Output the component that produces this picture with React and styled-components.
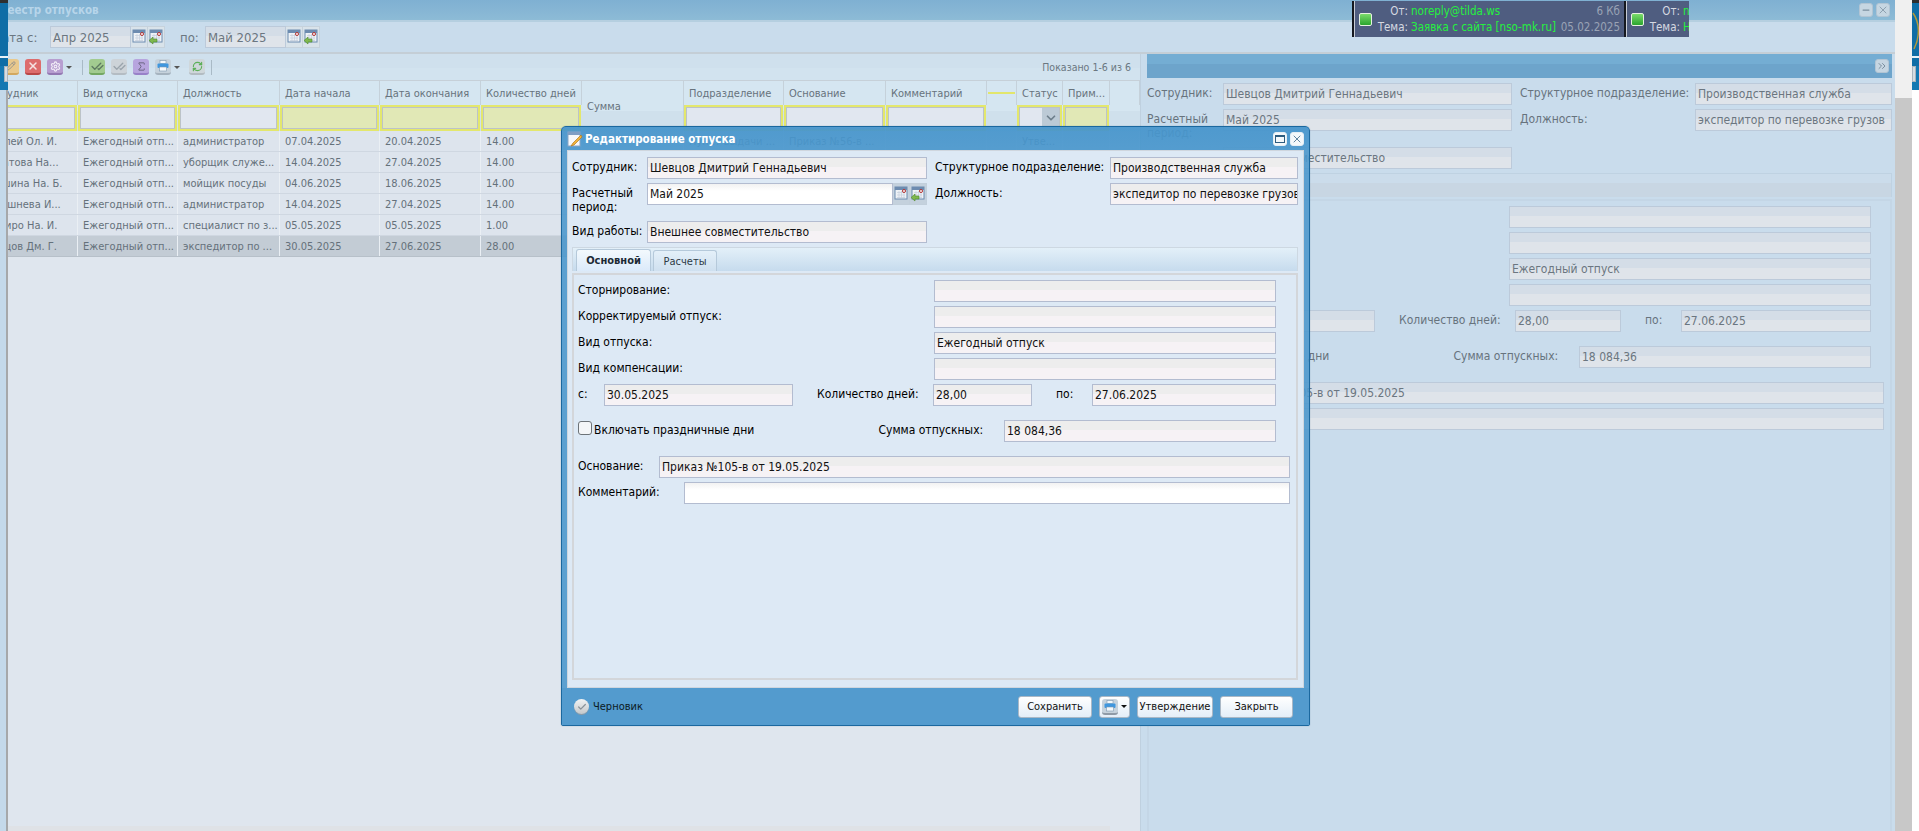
import React from 'react';
import styled, { createGlobalStyle } from 'styled-components';
import { Pencil, X, Settings, CheckCheck, Sigma, RefreshCw, Check, Minus, ChevronDown, ChevronsRight } from 'lucide-react';

const FONT = '"DejaVu Sans", "Noto Sans", sans-serif';

const GlobalStyle = createGlobalStyle`
    html, body {
        margin: 0;
        height: 100%;
        overflow: hidden;
        background: #fff;
        font-family: ${FONT};
        font-stretch: condensed;
        font-size: 12px;
    }
    * { box-sizing: border-box; }
`

const Screen = styled.div`
    position: relative;
    display: flex;
    width: 1919px;
    height: 831px;
    overflow: hidden;
`

/* desktop that peeks out on both sides of the window */
const Edge = styled.div`
    flex: 0 0 ${props => props.width}px;
    display: flex;
    flex-direction: column;
`

const EdgeTop = styled.div`
    height: 66px;
    flex: none;
    background: linear-gradient(#2e2e2e 0 3px, #0f6da6 3px 56px, #e8f2f8 56px 58px, #0f6da6 58px);
`

const EdgeMid = styled.div`
    height: 24px;
    flex: none;
    background: #1478b2;
    display: flex;
    justify-content: ${props => props.right ? 'flex-start' : 'flex-end'};
`

const EdgeButton = styled.div`
    width: 4px;
    height: 16px;
    background: #d6dde3;
    border: 1px solid #a9b4bd;
`

const EdgeRest = styled.div`
    flex: 1;
    background: ${props => props.right ? '#fff' : 'linear-gradient(90deg, #c4d9ea 0 6px, #a6a8aa 6px)'};
`

const RightEdgeArc = styled.svg`
    position: absolute;
    top: 3px;
    right: 0;
    width: 7px;
    height: 53px;
`

const Workspace = styled.div`
    flex: 1;
    min-width: 0;
    display: flex;
    flex-direction: column;
    overflow: hidden;
    background: #c9dcec;
`

const WindowTitle = styled.div`
    height: 22px;
    flex: none;
    display: flex;
    align-items: center;
    justify-content: space-between;
    padding-right: 5px;
    background: linear-gradient(#7fb0d2, #8dbbd6);
    border-bottom: 2px solid #b5cfe0;
    span {
        margin-left: -8px;
        font-size: 11.500px;
        font-weight: bold;
        color: #b7d5ea;
    }
`

const TitleButtons = styled.div`
    display: flex;
    gap: 3px;
`

const WinButton = styled.div`
    width: 14px;
    height: 14px;
    display: flex;
    align-items: center;
    justify-content: center;
    border-radius: 3px;
    background: ${props => props.bright ? '#f4f8fb' : '#c6d6e2'};
    border: 1px solid ${props => props.bright ? '#e4edf4' : '#b2c5d4'};
    color: ${props => props.bright ? '#2d5c80' : '#7b8f9f'};
`

const DateBar = styled.div`
    height: 32px;
    flex: none;
    display: flex;
    align-items: center;
    font-size: 13px;
    background: #c9dcec;
    border-bottom: 2px solid #c4ced6;
    color: #6b7781;
`

const DateLabel = styled.div`
    width: ${props => props.width}px;
    margin-left: ${props => props.shift || 0}px;
    flex: none;
    white-space: nowrap;
`

const Split = styled.div`
    flex: 1;
    min-height: 0;
    display: flex;
`

const GridPanel = styled.div`
    flex: 0 0 1132px;
    display: flex;
    flex-direction: column;
    overflow: hidden;
    background: #dfe6ee;
`

const Splitter = styled.div`
    flex: 0 0 7px;
    background: #c9dcec;
    border-left: 1px solid #bfd0df;
`

const Toolbar = styled.div`
    height: 27px;
    flex: none;
    display: flex;
    align-items: center;
    gap: 6px;
    font-size: 10.500px;
    background: linear-gradient(#cfe0ed 0 55%, #d2e3ef 55%);
    border-bottom: 1px solid #c6d0d8;
    color: #6b7781;
`

const ToolGroup = styled.div`
    display: flex;
    align-items: center;
    gap: ${props => props.gap === undefined ? 6 : props.gap}px;
    margin-left: ${props => props.shift || 0}px;
`

const ToolIcon = styled.div`
    width: 16px;
    height: 16px;
    flex: none;
    display: flex;
    align-items: center;
    justify-content: center;
    border-radius: 3px;
    background: ${props => props.bg};
    border-bottom: 2px solid ${props => props.edge};
    color: ${props => props.ink};
`

const Caret = styled.i`
    width: 0;
    height: 0;
    margin-left: 3px;
    border-left: 3px solid transparent;
    border-right: 3px solid transparent;
    border-top: 3px solid ${props => props.color || '#555'};
`

const ToolSep = styled.div`
    width: 1px;
    height: 15px;
    background: #a9bac6;
    margin-left: ${props => props.space || 0}px;
`

const PagerText = styled.div`
    margin-left: auto;
    padding-right: 9px;
`

const COLUMNS = '101px 100px 102px 100px 101px 101px 102px 100px 102px 101px 30px 46px 47px';

const HeaderGrid = styled.div`
    flex: none;
    height: 50px;
    width: 1163px;
    margin-left: -31px;
    display: grid;
    grid-template-columns: ${COLUMNS} 1fr;
    grid-template-rows: 24px 26px;
    font-size: 11px;
    background: linear-gradient(#d5e6f1 0 60%, #cfe0ec 60%);
    color: #67737d;
`

const HeadCell = styled.div`
    display: flex;
    align-items: center;
    padding-left: 5px;
    white-space: nowrap;
    overflow: hidden;
    border-right: 1px solid #c5d1da;
    ${props => props.tall && 'grid-column: 7; grid-row: 1 / span 2;'}
`

const YellowMark = styled.div`
    width: 100%;
    height: 2px;
    background: #e2e66c;
`

const HeadMark = styled.div`
    display: flex;
    align-items: center;
    padding: 0 1px;
    border-right: 1px solid #c5d1da;
`

const Filter = styled.div`
    margin: 0 1px 0 0;
    display: flex;
    justify-content: flex-end;
    border: 2px solid #e3e76d;
    background: ${props => props.filled ? '#e1e8b6' : '#e1e7f0'};
    box-shadow: inset 0 0 0 1px #bcc3c8;
`

const FilterArrow = styled.div`
    width: 17px;
    margin: 1px;
    display: flex;
    align-items: center;
    justify-content: center;
    background: #bccad6;
    color: #6e7f8c;
`

const Rows = styled.div`
    flex: 1;
    width: 1163px;
    margin-left: -31px;
    font-size: 11px;
    background: #dfe6ee;
    color: #65717b;
`

const Row = styled.div`
    display: grid;
    grid-template-columns: ${COLUMNS} 1fr;
    height: 21px;
    background: ${props => props.selected ? '#c3ccd5' : '#dde4ed'};
    border-bottom: 1px solid ${props => props.selected ? '#b7c0c9' : '#cfd7e1'};
`

const Cell = styled.div`
    display: flex;
    align-items: center;
    padding-left: 5px;
    white-space: nowrap;
    overflow: hidden;
    border-right: 1px solid #eaeff4;
`

const GridFooter = styled.div`
    height: 5px;
    flex: none;
    width: 1102px;
    background: #dfe2e6;
`

const DetailPanel = styled.div`
    flex: 1;
    min-width: 0;
    display: flex;
    flex-direction: column;
    overflow: hidden;
    background: #c9dcec;
`

const DetailHead = styled.div`
    height: 24px;
    flex: none;
    display: flex;
    align-items: center;
    justify-content: flex-end;
    padding-right: 3px;
    margin-right: 3px;
    background: linear-gradient(#74add3 0 40%, #6da4cb 40%);
`

const ScrollTrack = styled.div`
    flex: 0 0 17px;
    display: flex;
    flex-direction: column;
    background: #f0f0f0;
`

const ScrollThumb = styled.div`
    margin-top: 98px;
    flex: 1;
    background: #c8c8c8;
`

/* shared form: the detail panel is the same form behind the modal mask */
const FormRoot = styled.div`
    flex: 1;
    min-height: 0;
    display: flex;
    flex-direction: column;
    padding-top: ${props => props.top}px;
    color: ${props => props.muted ? '#67737d' : '#000'};
`

const TopFields = styled.div`
    display: grid;
    grid-template-columns: ${props => props.columns};
    grid-template-rows: 22px 34px 22px;
    row-gap: 4px;
    align-items: start;
`

const TopLabel = styled.div`
    line-height: 14px;
    padding-top: 3px;
    padding-left: ${props => props.inset || 0}px;
    white-space: ${props => props.wrap ? 'normal' : 'nowrap'};
    width: ${props => props.wrap ? '70px' : 'auto'};
`

const Field = styled.div`
    height: 22px;
    display: flex;
    align-items: center;
    padding-left: 2px;
    white-space: nowrap;
    overflow: hidden;
    flex: ${props => props.width ? `0 0 ${props.width}px` : '1'};
    color: ${props => props.muted ? '#6b7680' : '#111'};
    border: 1px solid ${props => props.muted ? '#bccada' : '#b3bcd0'};
    background: ${props => {
        if (props.muted) return 'linear-gradient(#d4dde7 0 45%, #dfe4ea 45%)';
        if (props.white) return 'linear-gradient(#f2f2f2, #fff 35%)';
        return 'linear-gradient(#ededed 0 45%, #f6f2f5 45%)';
    }};
`

const Combo = styled.div`
    display: flex;
    height: 22px;
`

const Trigger = styled.div`
    flex: 0 0 17px;
    display: flex;
    align-items: center;
    justify-content: center;
    background: ${props => props.pale ? '#d9e3ea' : '#c4d1dd'};
    border: 1px solid ${props => props.pale ? '#c6d2dc' : '#c2cfdb'};
    border-left: none;
`

const TabStrip = styled.div`
    margin-top: 4px;
    margin-right: ${props => props.right}px;
    height: 24px;
    flex: none;
    display: flex;
    align-items: flex-end;
    gap: 2px;
    padding-left: 3px;
    background: ${props => props.muted ? 'linear-gradient(#cbdceb 0 40%, #c8d6e3 40%)' : 'linear-gradient(#e3f0f9, #c6dbed)'};
    border: 1px solid ${props => props.muted ? '#bfd2e2' : '#cdd8e2'};
    border-bottom: none;
`

const Tab = styled.div`
    height: ${props => props.active ? 22 : 21}px;
    width: ${props => props.width}px;
    display: flex;
    align-items: center;
    justify-content: center;
    font-size: 11px;
    font-weight: ${props => props.active ? 'bold' : 'normal'};
    color: ${props => props.active ? '#1c2a35' : '#2d3a45'};
    border: 1px solid #b5c9da;
    border-bottom: none;
    border-radius: 3px 3px 0 0;
    background: ${props => props.active ? 'linear-gradient(#f3f9fd, #dbeafa)' : 'linear-gradient(#e4f0f9, #cfe0ef)'};
`

const TabBody = styled.div`
    margin-top: 2px;
    margin-right: ${props => props.right}px;
    flex: 1;
    min-height: 0;
    display: flex;
    flex-direction: column;
    padding: 5px 6px 0 4px;
    border: 2px solid ${props => props.muted ? '#c4d6e6' : '#d3d6da'};
    border-bottom-width: ${props => props.muted ? 0 : 2}px;
`

const FormRow = styled.div`
    display: flex;
    align-items: center;
    height: 22px;
    flex: none;
    margin-top: ${props => props.space === undefined ? 4 : props.space}px;
`

const FormLabel = styled.div`
    flex: 0 0 ${props => props.width}px;
    margin-left: ${props => props.shift || 0}px;
    padding-bottom: 2px;
    white-space: nowrap;
`

const CheckLabel = styled.label`
    flex: 0 0 300.500px;
    display: flex;
    align-items: center;
    gap: 2px;
    padding-bottom: 2px;
    white-space: nowrap;
`

const CheckBox = styled.input`
    width: 14px;
    height: 14px;
    margin: 0 0 5px 0;
    appearance: none;
    background: #f4f6f8;
    border: 1px solid #6d7378;
    border-radius: 3px;
`

const Dialog = styled.div`
    position: absolute;
    left: 561px;
    top: 126px;
    width: 749px;
    height: 600px;
    display: flex;
    flex-direction: column;
    border: 1px solid #1b689f;
    border-radius: 5px 5px 2px 2px;
    background: rgba(74, 150, 204, 0.88);
    box-shadow: 0 0 1px rgba(20, 70, 110, .6);
`

const DialogTitle = styled.div`
    height: 23px;
    flex: none;
    display: flex;
    align-items: center;
    padding: 0 5px;
    gap: 2px;
    color: #fff;
    font-size: 11.500px;
    font-weight: bold;
    background: linear-gradient(rgba(68, 148, 204, .5), rgba(70, 150, 205, .3));
`

const DialogButtons = styled(TitleButtons)`
    margin-left: auto;
`

const DialogBody = styled.div`
    height: 538px;
    flex: none;
    margin: 0 5px;
    padding: 0 5px 7px 4px;
    display: flex;
    flex-direction: column;
    background: #dde9f5;
    border: 1px solid #cfd6de;
`

const DialogFooter = styled.div`
    flex: 1;
    display: flex;
    align-items: center;
    padding: 0 16px 0 12px;
    font-size: 11px;
    background: #539bce;
    color: #0c1a24;
`

const StatusDot = styled.div`
    width: 15px;
    height: 15px;
    border-radius: 50%;
    display: flex;
    align-items: center;
    justify-content: center;
    background: linear-gradient(#f1f3f4, #c5c8ca);
    box-shadow: 0 1px 0 #8e9aa4;
    color: #8a9299;
    margin-right: 4px;
`

const FooterButtons = styled.div`
    margin-left: auto;
    display: flex;
    gap: 7px;
`

const Button = styled.div`
    width: ${props => props.width}px;
    height: 22px;
    display: flex;
    align-items: center;
    justify-content: center;
    white-space: nowrap;
    color: #111;
    border: 1px solid #aab8c6;
    border-radius: 3px;
    background: linear-gradient(#fff, #e4eef8);
`

const MailBar = styled.div`
    position: absolute;
    left: 1352px;
    top: 1px;
    width: 337px;
    height: 36px;
    display: flex;
    overflow: hidden;
    font-size: 11.500px;
    background: #4f5d80;
    color: #d5d9e2;
`

const MailItem = styled.div`
    flex: 0 0 ${props => props.width}px;
    min-width: 0;
    display: grid;
    grid-template-columns: 5px 13px minmax(0, 1fr);
    align-items: center;
    border-left: 2px solid #15181f;
    box-shadow: inset 1px 0 0 #c8ccd4;
    overflow: hidden;
`

const MailMark = styled.div`
    grid-column: 2;
    width: 13px;
    height: 13px;
    border: 1px solid #e6f2e0;
    border-radius: 2px;
    background: linear-gradient(#7bdc6b, #2aa52e);
`

const MailText = styled.div`
    grid-column: 3;
    display: grid;
    grid-template-columns: 31px 1fr auto;
    column-gap: 3px;
    row-gap: 3px;
    padding: 0 4px 0 5px;
    line-height: 13px;
    white-space: nowrap;
    b {
        font-weight: normal;
        color: #25f03f;
    }
    em {
        font-style: normal;
        text-align: right;
        color: #9aa3b5;
    }
    span { text-align: right; }
`

const CalendarIcon = ({ back }) => (
    <svg width="14" height="16" viewBox="0 0 14 16">
        <rect x="1" y="1" width="12" height="12" fill="#eef2f6" stroke="#6d8cb0" />
        <rect x="1" y="1" width="12" height="3" fill="#6d8cb0" />
        <path d="M3 6.500h8M3 9h8M3 11.500h8M5 5v7M7.500 5v7M10 5v7" stroke="#c4cfdc" strokeWidth=".7" />
        <circle cx="10" cy="5" r="1.500" fill="#fff" stroke="#b13030" />
        {back && <path d="M0 11.500 4 8v2h4v3H4v2z" fill="#7fb84e" stroke="#4f8a2c" strokeWidth=".6" />}
    </svg>
);

const PrinterIcon = ({ size = 12 }) => (
    <svg width={size} height={size} viewBox="0 0 12 12">
        <rect x="3" y="0.500" width="6" height="3" fill="#f4f8fb" stroke="#7c96ae" strokeWidth=".6" />
        <rect x="0.500" y="3.500" width="11" height="4.500" rx="1" fill="#3f97df" />
        <rect x="2.500" y="7" width="7" height="4" fill="#f4f8fb" stroke="#7c96ae" strokeWidth=".6" />
    </svg>
);

const DialogIcon = () => (
    <svg width="16" height="16" viewBox="0 0 16 16">
        <rect x="1" y="1" width="12" height="14" fill="#f6f8fb" stroke="#8aa6c6" />
        <rect x="1" y="1" width="12" height="3" fill="#7f9ec4" />
        <path d="M14 4 6 12l-2 3 3-1 8-8z" fill="#f0b43c" stroke="#b57a1d" strokeWidth=".7" />
    </svg>
);

const DateField = ({ value, width, white, muted }) => (
    <Combo>
        <Field width={width} white={white} muted={muted}>{value}</Field>
        <Trigger pale={muted}><CalendarIcon /></Trigger>
        <Trigger pale={muted}><CalendarIcon back /></Trigger>
    </Combo>
);

const VacationForm = ({ muted, top, columns, sizes, firstField }) => (
    <FormRoot muted={muted} top={top}>
        <TopFields columns={columns}>
            <TopLabel>Сотрудник:</TopLabel>
            <Field muted={muted}>Шевцов Дмитрий Геннадьевич</Field>
            <TopLabel inset={8}>Структурное подразделение:</TopLabel>
            <Field muted={muted}>Производственная служба</Field>
            <TopLabel wrap>Расчетный период:</TopLabel>
            {firstField}
            <TopLabel inset={8}>Должность:</TopLabel>
            <Field muted={muted}>экспедитор по перевозке грузов</Field>
            <TopLabel>Вид работы:</TopLabel>
            <Field muted={muted}>Внешнее совместительство</Field>
        </TopFields>
        <TabStrip muted={muted} right={sizes.right}>
            <Tab active width={75}>Основной</Tab>
            <Tab width={64}>Расчеты</Tab>
        </TabStrip>
        <TabBody muted={muted} right={sizes.right}>
            <FormRow space={0}>
                <FormLabel width={356}>Сторнирование:</FormLabel>
                <Field muted={muted} width={sizes.row}></Field>
            </FormRow>
            <FormRow>
                <FormLabel width={356}>Корректируемый отпуск:</FormLabel>
                <Field muted={muted} width={sizes.row}></Field>
            </FormRow>
            <FormRow>
                <FormLabel width={356}>Вид отпуска:</FormLabel>
                <Field muted={muted} width={sizes.row}>Ежегодный отпуск</Field>
            </FormRow>
            <FormRow>
                <FormLabel width={356}>Вид компенсации:</FormLabel>
                <Field muted={muted} width={sizes.row}></Field>
            </FormRow>
            <FormRow>
                <FormLabel width={26}>с:</FormLabel>
                <Field muted={muted} width={sizes.from}>30.05.2025</Field>
                <FormLabel width={116} shift={24}>Количество дней:</FormLabel>
                <Field muted={muted} width={sizes.days}>28,00</Field>
                <FormLabel width={36} shift={24}>по:</FormLabel>
                <Field muted={muted} width={sizes.to}>27.06.2025</Field>
            </FormRow>
            <FormRow space={14}>
                <CheckLabel>
                    <CheckBox type="checkbox" />
                    Включать праздничные дни
                </CheckLabel>
                <FormLabel width={125.5}>Сумма отпускных:</FormLabel>
                <Field muted={muted} width={sizes.sum}>18 084,36</Field>
            </FormRow>
            <FormRow space={14}>
                <FormLabel width={81}>Основание:</FormLabel>
                <Field muted={muted}>Приказ №105-в от 19.05.2025</Field>
            </FormRow>
            <FormRow>
                <FormLabel width={106}>Комментарий:</FormLabel>
                <Field muted={muted} white={!muted}></Field>
            </FormRow>
        </TabBody>
    </FormRoot>
);

const COLUMN_NAMES = ['Сотрудник', 'Вид отпуска', 'Должность', 'Дата начала', 'Дата окончания', 'Количество дней'];
const AFTER_SUM = ['Подразделение', 'Основание', 'Комментарий'];

const RECORDS = [
    { name: 'Кошлей Ол. И.', post: 'администратор', from: '07.04.2025', to: '20.04.2025', days: '14.00', unit: 'Пункт выдачи ...', base: 'Приказ №56-в ...', status: 'Утве...' },
    { name: 'Муратова На...', post: 'уборщик служе...', from: '14.04.2025', to: '27.04.2025', days: '14.00' },
    { name: 'Ильшина На. Б.', post: 'мойщик посуды', from: '04.06.2025', to: '18.06.2025', days: '14.00' },
    { name: 'Черешнева И...', post: 'администратор', from: '14.04.2025', to: '27.04.2025', days: '14.00' },
    { name: 'Шапиро На. И.', post: 'специалист по з...', from: '05.05.2025', to: '05.05.2025', days: '1.00' },
    { name: 'Шевцов Дм. Г.', post: 'экспедитор по ...', from: '30.05.2025', to: '27.06.2025', days: '28.00', selected: true },
];

const App = () => {
    return (
        <>
            <GlobalStyle />
            <Screen>
                <Edge width={8}>
                    <EdgeTop />
                    <EdgeMid><EdgeButton /></EdgeMid>
                    <EdgeRest />
                </Edge>

                <Workspace>
                    <WindowTitle>
                        <span>Реестр отпусков</span>
                        <TitleButtons>
                            <WinButton><Minus size={10} strokeWidth={3} /></WinButton>
                            <WinButton><X size={12} strokeWidth={1.5} /></WinButton>
                        </TitleButtons>
                    </WindowTitle>

                    <DateBar>
                        <DateLabel width={57} shift={-15}>Дата с:</DateLabel>
                        <DateField value="Апр 2025" width={81} muted />
                        <DateLabel width={25} shift={15}>по:</DateLabel>
                        <DateField value="Май 2025" width={81} muted />
                    </DateBar>

                    <Split>
                        <GridPanel>
                            <Toolbar>
                                <ToolGroup shift={-5}>
                                    <ToolIcon bg="#e9c98d" edge="#d2a85f" ink="#8d8d8d"><Pencil size={10} /></ToolIcon>
                                    <ToolIcon bg="#dd6c6c" edge="#b94747" ink="#f5e3e3"><X size={12} strokeWidth={3} /></ToolIcon>
                                    <ToolGroup gap={0}>
                                        <ToolIcon bg="#b79ed0" edge="#9378b2" ink="#f1ecf6"><Settings size={11} strokeWidth={2.5} /></ToolIcon>
                                        <Caret />
                                    </ToolGroup>
                                </ToolGroup>
                                <ToolSep space={4} />
                                <ToolGroup>
                                    <ToolIcon bg="#a2cb90" edge="#74a863" ink="#5d7a60"><CheckCheck size={13} strokeWidth={2.5} /></ToolIcon>
                                    <ToolIcon bg="#cdd3d8" edge="#b4bcc3" ink="#9aa4ac"><CheckCheck size={13} strokeWidth={2.5} /></ToolIcon>
                                    <ToolIcon bg="#b7a5de" edge="#9881c8" ink="#66607c"><Sigma size={11} strokeWidth={2} /></ToolIcon>
                                    <ToolGroup gap={0}>
                                        <ToolIcon bg="#c6d2dc" edge="#a5b3bf" ink="#333"><PrinterIcon /></ToolIcon>
                                        <Caret />
                                    </ToolGroup>
                                    <ToolGroup shift={3}>
                                        <ToolIcon bg="#cfd7db" edge="#b3bcc2" ink="#5caf58"><RefreshCw size={11} strokeWidth={2.5} /></ToolIcon>
                                        <ToolSep />
                                    </ToolGroup>
                                </ToolGroup>
                                <PagerText>Показано 1-6 из 6</PagerText>
                            </Toolbar>

                            <HeaderGrid>
                                {COLUMN_NAMES.map(name => <HeadCell key={name}>{name}</HeadCell>)}
                                <HeadCell tall>Сумма</HeadCell>
                                {AFTER_SUM.map(name => <HeadCell key={name}>{name}</HeadCell>)}
                                <HeadMark><YellowMark /></HeadMark>
                                <HeadCell>Статус</HeadCell>
                                <HeadCell>Прим...</HeadCell>
                                <HeadCell />
                                <Filter />
                                <Filter />
                                <Filter />
                                <Filter filled />
                                <Filter filled />
                                <Filter filled />
                                <Filter />
                                <Filter />
                                <Filter />
                                <div />
                                <Filter>
                                    <FilterArrow><ChevronDown size={14} strokeWidth={3} /></FilterArrow>
                                </Filter>
                                <Filter filled />
                                <div />
                            </HeaderGrid>

                            <Rows>
                                {RECORDS.map(r => (
                                    <Row key={r.name} selected={r.selected}>
                                        <Cell>{r.name}</Cell>
                                        <Cell>Ежегодный отп...</Cell>
                                        <Cell>{r.post}</Cell>
                                        <Cell>{r.from}</Cell>
                                        <Cell>{r.to}</Cell>
                                        <Cell>{r.days}</Cell>
                                        <Cell />
                                        <Cell>{r.unit}</Cell>
                                        <Cell>{r.base}</Cell>
                                        <Cell />
                                        <Cell />
                                        <Cell>{r.status}</Cell>
                                        <Cell />
                                        <Cell />
                                    </Row>
                                ))}
                            </Rows>
                            <GridFooter />
                        </GridPanel>

                        <Splitter />

                        <DetailPanel>
                            <DetailHead>
                                <WinButton><ChevronsRight size={12} /></WinButton>
                            </DetailHead>
                            <VacationForm
                                muted
                                top={5}
                                columns="76px 289px 183px 197px"
                                sizes={{ right: 3, row: 362, from: 196, days: 106, to: 190, sum: 292 }}
                                firstField={<Field muted>Май 2025</Field>}
                            />
                        </DetailPanel>
                    </Split>
                </Workspace>

                <ScrollTrack><ScrollThumb /></ScrollTrack>

                <Edge width={7}>
                    <EdgeTop />
                    <EdgeMid right><EdgeButton /></EdgeMid>
                    <EdgeRest right />
                </Edge>
                <RightEdgeArc viewBox="0 0 7 53">
                    <path d="M1 10C8 20 8 34 2 46" fill="none" stroke="#b49a3a" strokeWidth="1.500" />
                </RightEdgeArc>

                <MailBar>
                    <MailItem width={272}>
                        <MailMark />
                        <MailText>
                            <span>От:</span><b>noreply@tilda.ws</b><em>6 Кб</em>
                            <span>Тема:</span><b>Заявка с сайта [nso-mk.ru]</b><em>05.02.2025</em>
                        </MailText>
                    </MailItem>
                    <MailItem width={65}>
                        <MailMark />
                        <MailText>
                            <span>От:</span><b>n</b><em />
                            <span>Тема:</span><b>Н</b><em />
                        </MailText>
                    </MailItem>
                </MailBar>

                <Dialog>
                    <DialogTitle>
                        <DialogIcon />
                        Редактирование отпуска
                        <DialogButtons>
                            <WinButton bright><svg width="10" height="10"><rect x=".5" y="1.500" width="9" height="7" fill="none" stroke="#2d5c80" /><path d="M0 2h10" stroke="#2d5c80" strokeWidth="2" /></svg></WinButton>
                            <WinButton bright><X size={12} strokeWidth={1.5} /></WinButton>
                        </DialogButtons>
                    </DialogTitle>
                    <DialogBody>
                        <VacationForm
                            top={6}
                            columns="75px 280px 183px 188px"
                            sizes={{ right: 0, row: 342, from: 189, days: 99, to: 184, sum: 272 }}
                            firstField={<DateField value="Май 2025" width={246} white />}
                        />
                    </DialogBody>
                    <DialogFooter>
                        <StatusDot><Check size={10} strokeWidth={3} /></StatusDot>
                        Черновик
                        <FooterButtons>
                            <Button width={74}>Сохранить</Button>
                            <Button width={31}>
                                <ToolIcon bg="#c6d2dc" edge="#8f9aa6" ink="#333"><PrinterIcon /></ToolIcon>
                                <Caret color="#111" />
                            </Button>
                            <Button width={76}>Утверждение</Button>
                            <Button width={73}>Закрыть</Button>
                        </FooterButtons>
                    </DialogFooter>
                </Dialog>
            </Screen>
        </>
    );
};

export default App;
